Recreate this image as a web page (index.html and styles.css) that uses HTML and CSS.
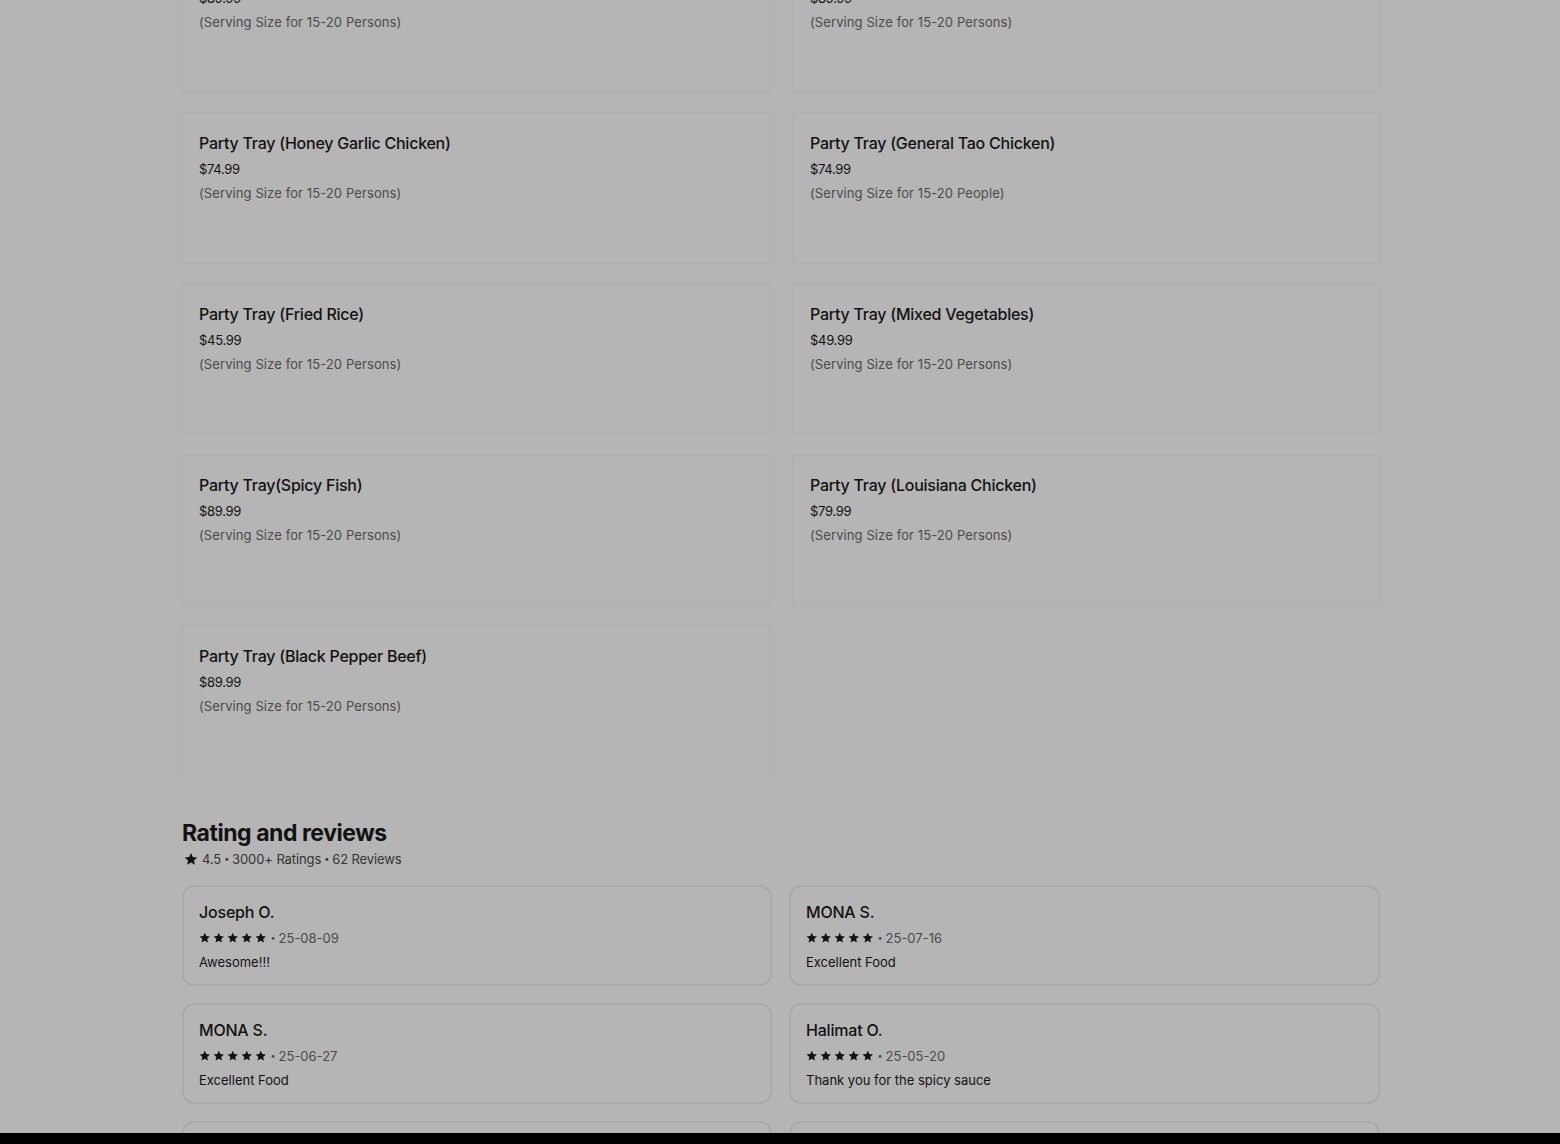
FILE: index.html
```html
<!DOCTYPE html>
<html lang="en">

<head>
  <meta charset="UTF-8">
  <meta name="viewport" content="width=device-width, initial-scale=1.0">
  <title>Party Trays</title>
  <link rel="stylesheet" href="styles.css">
</head>

<body>
  <div class="page">
    <div class="menu-grid">
      <div class="item-card">
        <div class="item-title">Party Tray (Sweet and Sour Pork)</div>
        <div class="item-price">$89.99</div>
        <div class="item-desc">(Serving Size for 15-20 Persons)</div>
      </div>
      <div class="item-card">
        <div class="item-title">Party Tray (Beef and Broccoli)</div>
        <div class="item-price">$89.99</div>
        <div class="item-desc">(Serving Size for 15-20 Persons)</div>
      </div>
      <div class="item-card">
        <div class="item-title">Party Tray (Honey Garlic Chicken)</div>
        <div class="item-price">$74.99</div>
        <div class="item-desc">(Serving Size for 15-20 Persons)</div>
      </div>
      <div class="item-card">
        <div class="item-title">Party Tray (General Tao Chicken)</div>
        <div class="item-price">$74.99</div>
        <div class="item-desc">(Serving Size for 15-20 People)</div>
      </div>
      <div class="item-card">
        <div class="item-title">Party Tray (Fried Rice)</div>
        <div class="item-price">$45.99</div>
        <div class="item-desc">(Serving Size for 15-20 Persons)</div>
      </div>
      <div class="item-card">
        <div class="item-title">Party Tray (Mixed Vegetables)</div>
        <div class="item-price">$49.99</div>
        <div class="item-desc">(Serving Size for 15-20 Persons)</div>
      </div>
      <div class="item-card">
        <div class="item-title">Party Tray(Spicy Fish)</div>
        <div class="item-price">$89.99</div>
        <div class="item-desc">(Serving Size for 15-20 Persons)</div>
      </div>
      <div class="item-card">
        <div class="item-title">Party Tray (Louisiana Chicken)</div>
        <div class="item-price">$79.99</div>
        <div class="item-desc">(Serving Size for 15-20 Persons)</div>
      </div>
      <div class="item-card">
        <div class="item-title">Party Tray (Black Pepper Beef)</div>
        <div class="item-price">$89.99</div>
        <div class="item-desc">(Serving Size for 15-20 Persons)</div>
      </div>
    </div>

    <div class="reviews">
      <h2>Rating and reviews</h2>
      <div class="rating-line">
        <svg class="star-big" viewBox="0 0 24 24"><path d="M12 1.5l3.1 7.1 7.7.7-5.8 5.1 1.7 7.6L12 18l-6.7 4 1.7-7.6-5.8-5.1 7.7-.7z"/></svg>
        <span class="rating-num">4.5</span>
        <span class="dot">•</span>
        <span>3000+ Ratings</span>
        <span class="dot">•</span>
        <span>62 Reviews</span>
      </div>

      <div class="review-grid">
        <div class="review-card">
          <div class="review-name">Joseph O.</div>
          <div class="review-meta">
            <span class="stars"></span><span class="dot">•</span><span>25-08-09</span>
          </div>
          <div class="review-text">Awesome!!!</div>
        </div>
        <div class="review-card">
          <div class="review-name">MONA S.</div>
          <div class="review-meta">
            <span class="stars"></span><span class="dot">•</span><span>25-07-16</span>
          </div>
          <div class="review-text">Excellent Food</div>
        </div>
        <div class="review-card">
          <div class="review-name">MONA S.</div>
          <div class="review-meta">
            <span class="stars"></span><span class="dot">•</span><span>25-06-27</span>
          </div>
          <div class="review-text">Excellent Food</div>
        </div>
        <div class="review-card">
          <div class="review-name">Halimat O.</div>
          <div class="review-meta">
            <span class="stars"></span><span class="dot">•</span><span>25-05-20</span>
          </div>
          <div class="review-text">Thank you for the spicy sauce</div>
        </div>
        <div class="review-card">
          <div class="review-name">Kevin L.</div>
          <div class="review-meta">
            <span class="stars"></span><span class="dot">•</span><span>25-05-02</span>
          </div>
          <div class="review-text">Great value</div>
        </div>
        <div class="review-card">
          <div class="review-name">Sarah P.</div>
          <div class="review-meta">
            <span class="stars"></span><span class="dot">•</span><span>25-04-18</span>
          </div>
          <div class="review-text">Very tasty</div>
        </div>
      </div>
    </div>
  </div>

  <div class="backdrop"></div>
  <div class="sheet-edge"></div>

  <script>
    // five little stars for each review
    var starSvg = '<svg viewBox="0 0 24 24"><path d="M12 1.5l3.1 7.1 7.7.7-5.8 5.1 1.7 7.6L12 18l-6.7 4 1.7-7.6-5.8-5.1 7.7-.7z"/></svg>';
    document.querySelectorAll('.stars').forEach(function (el) {
      el.innerHTML = starSvg.repeat(5);
    });
  </script>
</body>

</html>
```

FILE: styles.css
```css
body {
  margin: 0;
  background-color: #ffffff;
  font-family: 'Inter', 'Roboto', sans-serif;
  color: #1a1a1a;
  overflow: hidden;
}

.page {
  width: 1198px;
  margin: -58px auto 0 182px;
}

.menu-grid {
  display: grid;
  grid-template-columns: 588px 587px;
  column-gap: 23px;
  row-gap: 21px;
}

.item-card {
  height: 150px;
  box-sizing: border-box;
  padding: 19px 17px;
  background-color: #fff;
  box-shadow: 0 0 2px rgba(0, 0, 0, 0.06), inset 0 0 3px rgba(0, 0, 0, 0.04);
}

.item-title {
  font-size: 16px;
  font-weight: 500;
  line-height: 22px;
  letter-spacing: -0.25px;
}

.item-price {
  font-size: 13px;
  line-height: 24px;
  margin-top: 3px;
  letter-spacing: -0.3px;
}

.item-desc {
  font-size: 13px;
  line-height: 24px;
  color: #6b6b6b;
  letter-spacing: 0.1px;
}

.reviews {
  margin-top: 42px;
}

.reviews h2 {
  margin: 0;
  font-size: 23px;
  font-weight: 700;
  line-height: 30px;
  letter-spacing: -0.45px;
}

.rating-line {
  display: flex;
  align-items: center;
  gap: 3px;
  font-size: 13px;
  line-height: 22px;
  color: #4b4b4b;
  letter-spacing: -0.1px;
}

.star-big {
  width: 14px;
  height: 14px;
  margin: 0 1px 0 2px;
  fill: #1a1a1a;
}

.dot {
  font-size: 9px;
}

.review-grid {
  display: grid;
  grid-template-columns: 590px 591px;
  column-gap: 17px;
  row-gap: 17px;
  margin-top: 15px;
}

.review-card {
  height: 101px;
  box-sizing: border-box;
  padding: 14px 15px;
  border: 2px solid #f0f0f0;
  border-radius: 12px;
}

.review-name {
  font-size: 16px;
  font-weight: 500;
  line-height: 22px;
  letter-spacing: -0.2px;
}

.review-meta {
  display: flex;
  align-items: center;
  gap: 3px;
  font-size: 13px;
  line-height: 24px;
  color: #6b6b6b;
  margin-top: 3px;
}

.stars {
  display: flex;
  gap: 2.5px;
  margin-right: 1px;
}

.stars svg {
  width: 11.5px;
  height: 11.5px;
  fill: #1a1a1a;
}

.review-text {
  font-size: 13px;
  line-height: 24px;
}

.backdrop {
  position: fixed;
  inset: 0;
  background-color: rgba(0, 0, 0, 0.29);
}

.sheet-edge {
  position: fixed;
  left: 0;
  right: 0;
  bottom: 0;
  height: 11px;
  background-color: #000;
}
```
